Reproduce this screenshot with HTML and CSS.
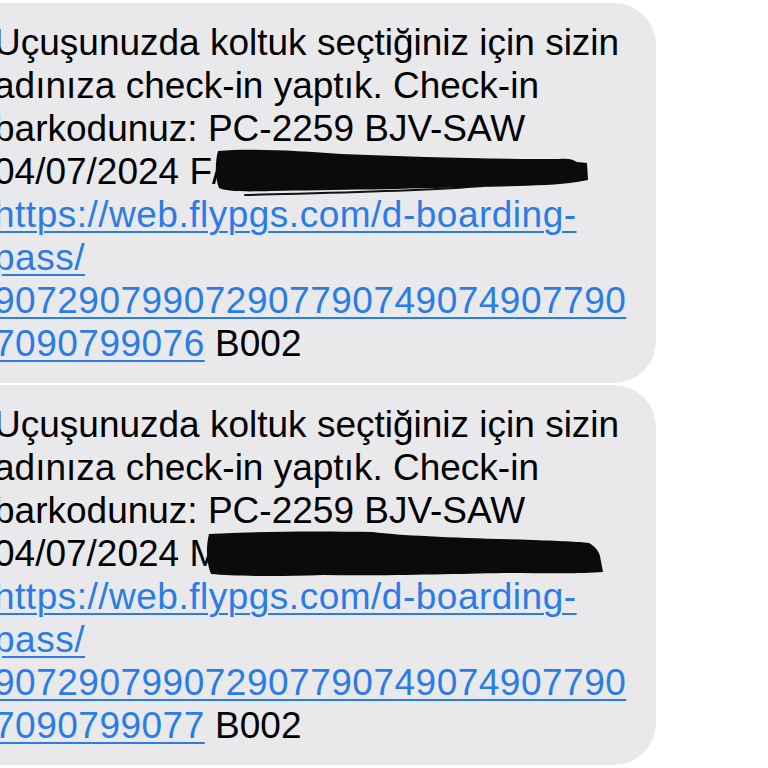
FILE: index.html
```html
<!DOCTYPE html>
<html lang="tr">
<head>
<meta charset="utf-8">
<title>Mesajlar</title>
<link rel="stylesheet" href="styles.css">
</head>
<body>
<div class="thread">
  <div class="bubble">
    <p class="msg">Uçuşunuzda koltuk seçtiğiniz için sizin<br>adınıza check-in yaptık. Check-in<br>barkodunuz: PC-2259 BJV-SAW<br>04/07/2024 F/<br><a class="link" href="#">https://web.flypgs.com/d-boarding-<br>pass/<br>907290799072907790749074907790<br>7090799076</a> B002</p>
    <svg class="redact redact-one" width="400" height="60" viewBox="0 0 400 60" aria-hidden="true">
      <path d="M7 9 C40 6 90 9 130 12 C200 15 280 17 348 17 C356 16 362 17 366 20 L376 21 L377 38 L366 40 C340 44 300 44 260 45 C200 47 120 48 60 49 C30 50 14 49 8 46 C4 36 4 20 7 9 Z" fill="#0b0b0b"/>
      <path d="M34 53 C100 51 200 50 272 44" fill="none" stroke="#111" stroke-width="2" stroke-linecap="round"/>
    </svg>
  </div>
  <div class="bubble">
    <p class="msg">Uçuşunuzda koltuk seçtiğiniz için sizin<br>adınıza check-in yaptık. Check-in<br>barkodunuz: PC-2259 BJV-SAW<br>04/07/2024 M<br><a class="link" href="#">https://web.flypgs.com/d-boarding-<br>pass/<br>907290799072907790749074907790<br>7090799077</a> B002</p>
    <svg class="redact redact-two" width="410" height="50" viewBox="0 0 410 50" aria-hidden="true">
      <path d="M6 6 C60 3 120 3 170 4 C200 8 260 10 330 12 C360 13 380 14 386 15 C393 19 396 24 397 28 L400 44 C380 46 340 45 300 45 C250 46 180 48 120 47 C70 49 30 48 8 46 C3 34 3 18 6 6 Z" fill="#0b0b0b"/>
    </svg>
  </div>
</div>
</body>
</html>
```

FILE: styles.css
```css
html, body {
  margin: 0;
  padding: 0;
  background: #ffffff;
  width: 768px;
  height: 768px;
  overflow: hidden;
}

.thread {
  display: flex;
  flex-direction: column;
  gap: 2px;
  padding-top: 3px;
}

.bubble {
  position: relative;
  box-sizing: border-box;
  width: 696px;
  margin-left: -40px;
  padding: 18px 0 18px 34px;
  background: #e9e9eb;
  border-radius: 42px;
}

.msg {
  margin: 0;
  font-family: "Liberation Sans", Arial, sans-serif;
  font-size: 37px;
  line-height: 43px;
  color: #000000;
  white-space: nowrap;
}

.link {
  color: #2a7de6;
  letter-spacing: 0.5px;
  text-decoration: underline;
  text-decoration-thickness: 2px;
  text-underline-offset: 4px;
}

.redact {
  position: absolute;
  display: block;
}

.redact-one {
  left: 251px;
  top: 139px;
}

.redact-two {
  left: 243px;
  top: 143px;
}
```
